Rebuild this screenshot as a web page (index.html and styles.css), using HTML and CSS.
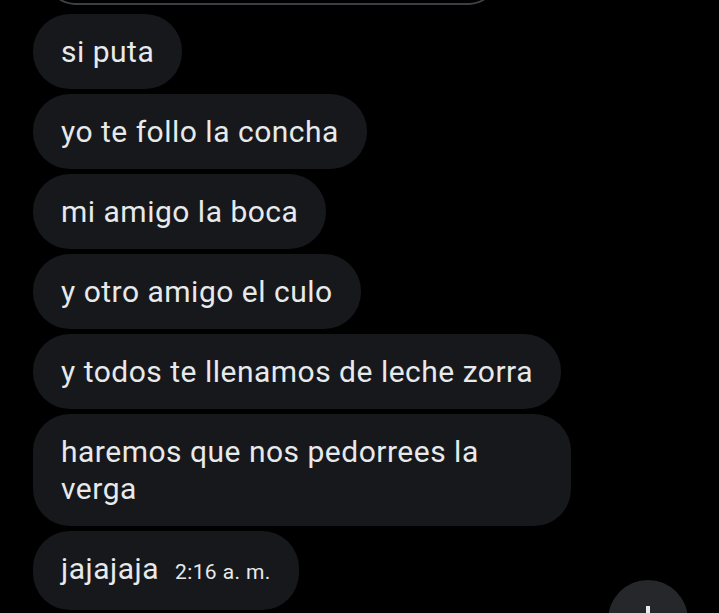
FILE: index.html
```html
<!DOCTYPE html>
<html lang="es">
<head>
    <meta charset="UTF-8">
    <meta name="viewport" content="width=device-width, initial-scale=1.0">
    <title>Mensajes</title>
    <link rel="stylesheet" href="styles.css">
</head>
<body>
    <div class="chat">
        <div class="quoted"></div>
        <div class="msg">si puta</div>
        <div class="msg">yo te follo la concha</div>
        <div class="msg">mi amigo la boca</div>
        <div class="msg">y otro amigo el culo</div>
        <div class="msg">y todos te llenamos de leche zorra</div>
        <div class="msg">haremos que nos pedorrees la verga</div>
        <div class="msg">jajajaja<span class="time">2:16 a. m.</span></div>
    </div>
    <div class="scroll-btn">
        <svg width="40" height="40" viewBox="0 0 40 40">
            <path d="M20 6v28M8 22l12 12 12-12" stroke="#e7e9ea" stroke-width="4" fill="none"/>
        </svg>
    </div>
</body>
</html>
```

FILE: styles.css
```css
html, body{
    margin: 0;
    padding: 0;
    background: #000;
    height: 613px;
    overflow: hidden;
}
body{
    font-family: Roboto, "Noto Sans", sans-serif;
    color: #e7e9ea;
    position: relative;
}
.chat{
    display: flex;
    flex-direction: column;
    align-items: flex-start;
    gap: 5px;
    padding-left: 33px;
    margin-top: -37px;
}
.quoted{
    width: 446px;
    height: 40px;
    margin-left: 14px;
    margin-bottom: 4px;
    border: 2px solid #3c3f44;
    border-top: none;
    border-radius: 0 0 28px 28px;
}
.msg{
    box-sizing: border-box;
    max-width: 538px;
    padding: 19px 28px;
    font-size: 30px;
    letter-spacing: 0.5px;
    line-height: 37px;
    background: #16181c;
    border-radius: 37px;
}
.time{
    font-size: 21px;
    letter-spacing: 0.4px;
    margin-left: 16px;
}
.scroll-btn{
    position: absolute;
    left: 608px;
    top: 580px;
    width: 80px;
    height: 80px;
    border-radius: 50%;
    background: #25272b;
    display: flex;
    align-items: center;
    justify-content: center;
}
```
